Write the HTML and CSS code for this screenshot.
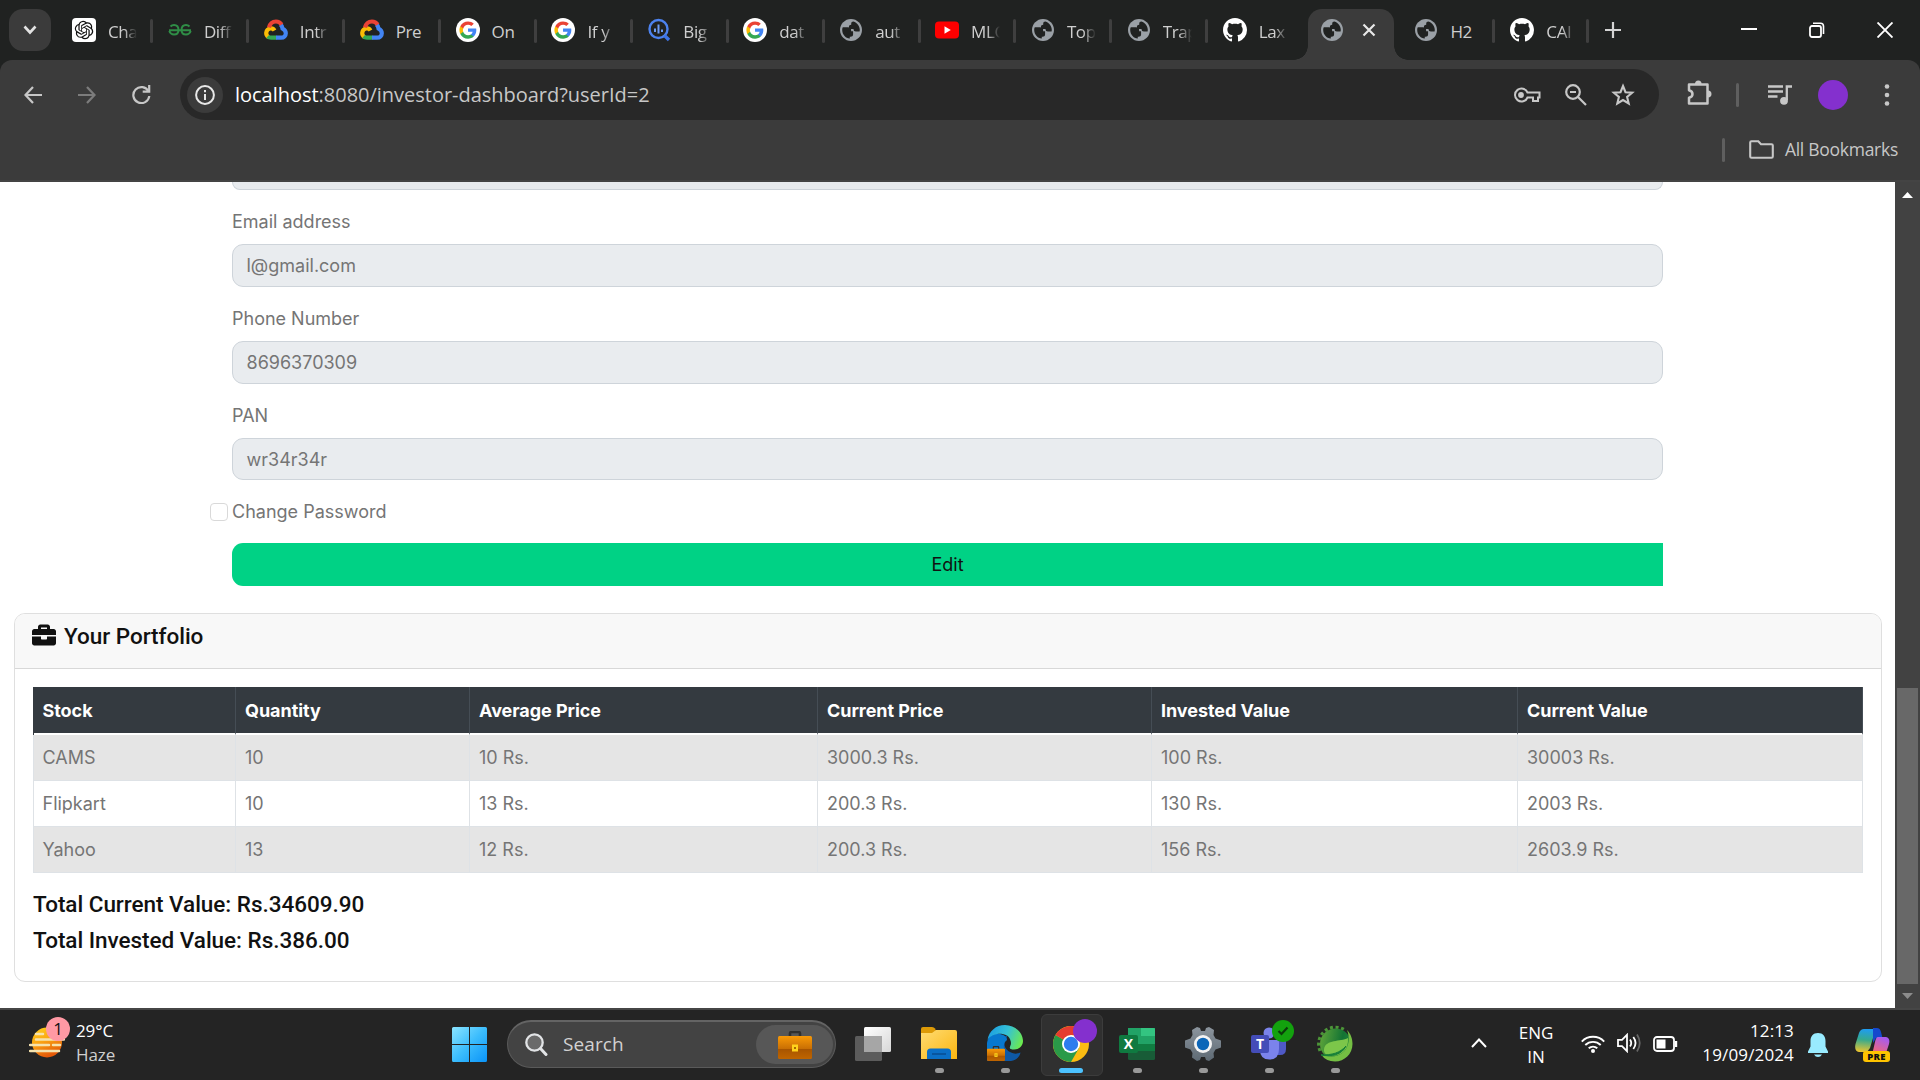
FILE: index.html
```html
<!DOCTYPE html>
<html lang="en">
<head>
<meta charset="utf-8">
<title>Investor Dashboard</title>
<link rel="stylesheet" href="styles.css">
</head>
<body>
<svg class="defs" width="0" height="0">
  <defs>
    <linearGradient id="sun" x1="0" y1="0" x2=".4" y2="1"><stop offset="0" stop-color="#ffd21a"/><stop offset=".5" stop-color="#fba613"/><stop offset="1" stop-color="#e55a08"/></linearGradient>
    <linearGradient id="win" x1="0" y1="0" x2="1" y2="1"><stop offset="0" stop-color="#8be4ff"/><stop offset=".5" stop-color="#3cbdfd"/><stop offset="1" stop-color="#0a93f7"/></linearGradient>
    <linearGradient id="bag" x1="0" y1="0" x2="0" y2="1"><stop offset="0" stop-color="#f99a07"/><stop offset=".55" stop-color="#c96f04"/><stop offset=".58" stop-color="#a85500"/><stop offset="1" stop-color="#bf6500"/></linearGradient>
    <linearGradient id="folder" x1="0" y1="0" x2="1" y2="1"><stop offset="0" stop-color="#ffdc73"/><stop offset="1" stop-color="#fbb50f"/></linearGradient>
    <linearGradient id="edgeTop" x1="0" y1=".3" x2="1" y2=".6"><stop offset="0" stop-color="#1b9de2"/><stop offset=".5" stop-color="#35c1d6"/><stop offset="1" stop-color="#6cea4f"/></linearGradient>
    <linearGradient id="gear" x1="0" y1="0" x2="0" y2="1"><stop offset="0" stop-color="#8c959e"/><stop offset="1" stop-color="#5e6a74"/></linearGradient>
    <linearGradient id="spring" x1="0" y1="0" x2="1" y2=".2"><stop offset="0" stop-color="#63a83a"/><stop offset=".75" stop-color="#137334"/><stop offset="1" stop-color="#1c8038"/></linearGradient>
    <linearGradient id="copL" x1=".3" y1="0" x2=".2" y2="1"><stop offset="0" stop-color="#1f9cf0"/><stop offset=".45" stop-color="#35a98f"/><stop offset="1" stop-color="#f0c52c"/></linearGradient>
    <linearGradient id="copR" x1=".6" y1="0" x2=".2" y2="1"><stop offset="0" stop-color="#a75bf0"/><stop offset="1" stop-color="#fb6a68"/></linearGradient>
    <linearGradient id="view" x1="0" y1="0" x2="1" y2="1"><stop offset="0" stop-color="#ffffff"/><stop offset="1" stop-color="#d7d7d7"/></linearGradient>
    <symbol id="globe" viewBox="2 2 20 20"><path fill="#9aa0a6" d="M12 2C6.480 2 2 6.480 2 12s4.480 10 10 10 10-4.480 10-10S17.520 2 12 2z"/><path class="sea" d="M4 12c0-1 .1-1.600.5-2.400h4.700c2 0 2.900 1 2.900 2.500v1.100h1.800v3c0 1.300-1 2-2.300 2h-.7v1.600C7 19.500 4 16 4 12zM14.200 4.300c3.400 1 5.800 4.200 5.800 7.700l-.2 1.400h-3.300c-1.400 0-2.200-.8-2.200-2.300h-2.300c-1.200 0-1.900-.8-1.900-1.900 0-1.300.8-2 2.100-2V6.100c0-1 .7-1.800 2-1.800z"/></symbol>
    <symbol id="github" viewBox="0 0 16 16"><path fill="#fff" d="M8 0C3.58 0 0 3.58 0 8c0 3.54 2.29 6.53 5.47 7.59.4.07.55-.17.55-.38 0-.19-.01-.82-.01-1.49-2.01.37-2.53-.49-2.69-.94-.09-.23-.48-.94-.82-1.13-.28-.15-.68-.52-.01-.53.63-.01 1.08.58 1.23.82.72 1.21 1.87.87 2.33.66.07-.52.28-.87.51-1.07-1.78-.2-3.64-.89-3.64-3.95 0-.87.31-1.59.82-2.15-.08-.2-.36-1.02.08-2.12 0 0 .67-.21 2.2.82.64-.18 1.32-.27 2-.27s1.36.09 2 .27c1.53-1.04 2.200-.82 2.200-.82.44 1.100.16 1.920.08 2.120.51.56.82 1.270.82 2.150 0 3.070-1.870 3.750-3.650 3.950.29.25.54.73.54 1.480 0 1.070-.01 1.930-.01 2.200 0 .21.15.46.55.38A8.013 8.013 0 0 0 16 8c0-4.420-3.580-8-8-8z"/></symbol>
    <symbol id="google" viewBox="0 0 24 24"><circle cx="12" cy="12" r="12" fill="#fff"/><g transform="translate(2.600 2.600) scale(.785)"><path fill="#4285f4" d="M22.56 12.25c0-.78-.07-1.53-.2-2.25H12v4.26h5.92c-.26 1.37-1.04 2.53-2.21 3.31v2.77h3.57c2.08-1.92 3.28-4.74 3.28-8.09z"/><path fill="#34a853" d="M12 23c2.97 0 5.46-.98 7.28-2.66l-3.57-2.77c-.98.66-2.23 1.06-3.71 1.06-2.86 0-5.29-1.93-6.16-4.53H2.18v2.84C3.99 20.53 7.7 23 12 23z"/><path fill="#fbbc05" d="M5.84 14.09c-.22-.66-.35-1.36-.35-2.09s.13-1.43.35-2.09V7.07H2.18C1.43 8.55 1 10.22 1 12s.43 3.45 1.18 4.93l3.66-2.84z"/><path fill="#ea4335" d="M12 5.38c1.62 0 3.06.56 4.21 1.64l3.15-3.15C17.45 2.09 14.97 1 12 1 7.7 1 3.99 3.47 2.18 7.07l3.66 2.84c.87-2.6 3.3-4.53 6.16-4.53z"/></g></symbol>
    <symbol id="cloud" viewBox="0 0 24 24"><g fill="none" stroke-width="4.200"><path stroke="#fbbc05" d="M10.500 12.500C8.500 9 3 10 2.300 14.500c-.3 2 .8 3.700 2.300 4.700"/><path stroke="#34a853" d="M3.600 18.500c1 .9 2.200 1.200 3.400 1.200h5.500"/><path stroke="#4285f4" d="M12 19.700h5c3 0 4.800-2 4.800-4.500 0-2.200-1.300-3.700-3.200-4.600-.3-2-1-3.300-2.200-4.300"/><path stroke="#ea4335" d="M5 9.500c1-4 3.500-6 7-6 2.500 0 4.300 1.100 5.600 3.100"/></g></symbol>
    <symbol id="bagicon" viewBox="0 0 34 28"><path d="M12 6V2.500Q12 1 13.500 1h7Q22 1 22 2.500V6" fill="none" stroke="#30302f" stroke-width="2.600"/><rect y="5" width="34" height="23" rx="1.500" fill="url(#bag)"/><rect x="14" y="13.500" width="6" height="7" fill="#ffd21c"/><rect x="16" y="16" width="2" height="2" fill="#a86a00"/></symbol>
  </defs>
</svg>

<div class="tabstrip">
  <div class="tabsearch"><svg width="14" height="10" viewBox="0 0 14 10"><path d="M1.500 1.500 7 7.500l5.500-6" fill="none" stroke="#e3e3e3" stroke-width="2.600"/></svg></div>
  <div class="tabs">
    <div class="tab"><svg class="fav" viewBox="0 0 24 24"><rect width="24" height="24" rx="4" fill="#fff"/><path transform="translate(2.800 2.800) scale(.77)" fill="#111" d="M22.2819 9.8211a5.9847 5.9847 0 0 0-.5157-4.9108 6.0462 6.0462 0 0 0-6.5098-2.9A6.0651 6.0651 0 0 0 4.9807 4.1818a5.9847 5.9847 0 0 0-3.9977 2.9 6.0462 6.0462 0 0 0 .7427 7.0966 5.98 5.98 0 0 0 .511 4.9107 6.051 6.051 0 0 0 6.5146 2.9001A5.9847 5.9847 0 0 0 13.2599 24a6.0557 6.0557 0 0 0 5.7718-4.2058 5.9894 5.9894 0 0 0 3.9977-2.9001 6.0557 6.0557 0 0 0-.7475-7.073zm-9.022 12.6081a4.4755 4.4755 0 0 1-2.8764-1.0408l.1419-.0804 4.7783-2.7582a.7948.7948 0 0 0 .3927-.6813v-6.7369l2.02 1.1686a.071.071 0 0 1 .038.052v5.5826a4.504 4.504 0 0 1-4.4945 4.4944zm-9.6607-4.1254a4.4708 4.4708 0 0 1-.5346-3.0137l.142.0852 4.783 2.7582a.7712.7712 0 0 0 .7806 0l5.8428-3.3685v2.3324a.0804.0804 0 0 1-.0332.0615L9.74 19.9502a4.4992 4.4992 0 0 1-6.1408-1.6464zM2.3408 7.8956a4.485 4.485 0 0 1 2.3655-1.9728V11.6a.7664.7664 0 0 0 .3879.6765l5.8144 3.3543-2.0201 1.1685a.0757.0757 0 0 1-.071 0l-4.8303-2.7865A4.504 4.504 0 0 1 2.3408 7.872zm16.5963 3.8558L13.1038 8.364 15.1192 7.2a.0757.0757 0 0 1 .071 0l4.8303 2.7913a4.4944 4.4944 0 0 1-.6765 8.1042v-5.6772a.79.79 0 0 0-.407-.667zm2.0107-3.0231l-.142-.0852-4.7735-2.7818a.7759.7759 0 0 0-.7854 0L9.409 9.2297V6.8974a.0662.0662 0 0 1 .0284-.0615l4.8303-2.7866a4.4992 4.4992 0 0 1 6.6802 4.66zM8.3065 12.863l-2.02-1.1638a.0804.0804 0 0 1-.038-.0567V6.0742a4.4992 4.4992 0 0 1 7.3757-3.4537l-.142.0805L8.704 5.459a.7948.7948 0 0 0-.3927.6813zm1.0976-2.3654l2.602-1.4998 2.6069 1.4998v2.9994l-2.5974 1.4997-2.6067-1.4997Z"/></svg><span>Cha</span></div>
    <div class="tab"><svg class="fav" viewBox="0 0 24 24"><path fill="none" stroke="#2f8d46" stroke-width="2" d="M2.500 8.500Q4 7 6 7q4.500 0 4.500 5 0 4.500-4.500 4.500-3.500 0-4.800-3.500M1 12.300h22M21.500 8.500Q20 7 18 7q-4.500 0-4.500 5 0 4.500 4.500 4.500 3.500 0 4.800-3.500"/></svg><span>Diff</span></div>
    <div class="tab"><svg class="fav"><use href="#cloud"/></svg><span>Intr</span></div>
    <div class="tab"><svg class="fav"><use href="#cloud"/></svg><span class="full">Pre</span></div>
    <div class="tab"><svg class="fav"><use href="#google"/></svg><span class="full">On</span></div>
    <div class="tab"><svg class="fav"><use href="#google"/></svg><span>If y</span></div>
    <div class="tab"><svg class="fav" viewBox="0 0 24 24"><circle cx="11.500" cy="11" r="9" fill="none" stroke="#4c82ee" stroke-width="2.400"/><path stroke="#3d74e6" stroke-width="3.400" d="m17.500 17.500 4.500 4.500"/><path stroke="#6d9bf5" stroke-width="2" d="M8 10.500V14M11.500 6.500v9M15 11.500V14"/></svg><span>Big</span></div>
    <div class="tab"><svg class="fav"><use href="#google"/></svg><span>dat</span></div>
    <div class="tab"><svg class="fav small"><use href="#globe"/></svg><span>aut</span></div>
    <div class="tab"><svg class="fav" viewBox="0 0 24 24"><rect y="3.500" width="24" height="17" rx="4" fill="#f00"/><path fill="#fff" d="m9.500 8.300 6.300 3.700-6.300 3.700z"/></svg><span>MLO</span></div>
    <div class="tab"><svg class="fav small"><use href="#globe"/></svg><span>Top</span></div>
    <div class="tab"><svg class="fav small"><use href="#globe"/></svg><span>Trap</span></div>
    <div class="tab last"><svg class="fav"><use href="#github"/></svg><span>Lax</span></div>
    <div class="tab active"><svg class="fav small"><use href="#globe"/></svg><svg class="close" width="14" height="14" viewBox="0 0 14 14"><path d="m1.500 1.500 11 11m0-11-11 11" stroke="#e8e8e8" stroke-width="2.200"/></svg></div>
    <div class="tab h2"><svg class="fav small"><use href="#globe"/></svg><span class="full">H2</span></div>
    <div class="tab ca"><svg class="fav"><use href="#github"/></svg><span>CAI</span></div>
  </div>
  <svg class="plus" width="16" height="16" viewBox="0 0 16 16"><path d="M8 0v16M0 8h16" stroke="#d4d4d4" stroke-width="2.200"/></svg>
  <div class="wincontrols">
    <svg width="16" height="16" viewBox="0 0 16 16"><path d="M0 7h16" stroke="#fff" stroke-width="2"/></svg>
    <svg width="16" height="16" viewBox="0 0 16 16"><rect x="1" y="4" width="11" height="11" rx="2" fill="none" stroke="#fff" stroke-width="1.800"/><path d="M4 1.300h7.500q3 0 3 3V12" fill="none" stroke="#fff" stroke-width="1.600"/></svg>
    <svg width="16" height="16" viewBox="0 0 16 16"><path d="m.5.5 15 15m0-15-15 15" stroke="#fff" stroke-width="1.900"/></svg>
  </div>
</div>

<div class="toolbar">
  <div class="nav">
    <svg width="18" height="18" viewBox="0 0 18 18"><path d="M18 9H1.500M9 1 1.500 9 9 17" fill="none" stroke="#c7c7c7" stroke-width="2.200"/></svg>
    <svg width="18" height="18" viewBox="0 0 18 18"><path d="M0 9h16.500M9 1l7.500 8L9 17" fill="none" stroke="#7c7c7c" stroke-width="2.200"/></svg>
    <svg width="19" height="19" viewBox="0 0 19 19"><path d="M16.500 6.500A8 8 0 1 0 17.300 11" fill="none" stroke="#c7c7c7" stroke-width="2.200"/><path d="M18.300 0v7.800h-7.600V5.600h5.400V0z" fill="#c7c7c7"/></svg>
  </div>
  <div class="omnibox">
    <div class="info"><svg width="20" height="20" viewBox="0 0 20 20"><circle cx="10" cy="10" r="8.900" fill="none" stroke="#e8e8e8" stroke-width="2"/><path d="M10 9v6M10 5v2.200" stroke="#e8e8e8" stroke-width="2"/></svg></div>
    <div class="url"><b>localhost</b>:8080/investor-dashboard?userId=2</div>
    <div class="omni-icons">
      <svg width="28" height="18" viewBox="0 0 28 18"><path d="M14.500 6.500a6.500 6.500 0 1 0 0 5H20V15h5v-3.500h1.500v-5z" fill="none" stroke="#c7c7c7" stroke-width="2"/><circle cx="8" cy="9" r="2.900" fill="#c7c7c7"/></svg>
      <svg width="22" height="22" viewBox="0 0 22 22"><circle cx="8" cy="8" r="6.800" fill="none" stroke="#c7c7c7" stroke-width="2.200"/><path d="m13 13 8 8M5 8h6" stroke="#c7c7c7" stroke-width="2.200"/></svg>
      <svg width="24" height="24" viewBox="0 0 24 24"><path d="m12 3 2.500 6.200 6.700.5-5.100 4.300 1.600 6.500L12 17l-5.700 3.500 1.600-6.500-5.100-4.300 6.700-.5z" fill="none" stroke="#c7c7c7" stroke-width="2.100"/></svg>
    </div>
  </div>
  <svg class="puzzle" width="25" height="26" viewBox="0 0 25 26"><path d="M2 4.500h18.500v19H2v-5.700q3.500-.8 3.500-3.800T2 10.200z" fill="none" stroke="#c7c7c7" stroke-width="2.500" stroke-linejoin="round"/><path fill="#c7c7c7" d="M8 4a3.300 3.500 0 0 1 6.600 0zM21 10.500a3.500 3.500 0 0 1 0 7z"/></svg>
  <i class="vsep"></i>
  <svg class="media" width="24" height="22" viewBox="0 0 24 22"><path d="M0 2.500h15M0 7.500h15M0 12.500h9.500M18.800 16V2.500H24" fill="none" stroke="#c7c7c7" stroke-width="2.300"/><circle cx="16" cy="16.800" r="3.900" fill="#c7c7c7"/></svg>
  <div class="avatar"></div>
  <svg class="dots" width="6" height="22" viewBox="0 0 6 22"><g fill="#c7c7c7"><circle cx="3" cy="2.500" r="2.300"/><circle cx="3" cy="11" r="2.300"/><circle cx="3" cy="19.500" r="2.300"/></g></svg>
</div>
<div class="bookmarks">
  <i class="vsep"></i>
  <svg width="25" height="19" viewBox="0 0 25 19"><path d="M1.200 2.500q0-1.300 1.300-1.300h6.800l2.700 3h10.500q1.300 0 1.300 1.300v11q0 1.300-1.300 1.300h-20q-1.300 0-1.300-1.300z" fill="none" stroke="#c7c7c7" stroke-width="2.100"/></svg>
  <span>All Bookmarks</span>
</div>

<div class="viewport">
  <main>
    <div class="form">
      <div class="prev-input"></div>
      <label>Email address</label><div class="input">l@gmail.com</div>
      <label>Phone Number</label><div class="input">8696370309</div>
      <label>PAN</label><div class="input short">wr34r34r</div>
      <div class="check"><i></i><span>Change Password</span></div>
      <div class="edit">Edit</div>
    </div>
    <section class="card">
      <div class="card-head"><svg width="24" height="24" viewBox="0 0 512 512"><path fill="#111" d="M320 336c0 8.840-7.160 16-16 16h-96c-8.840 0-16-7.160-16-16v-48H0v144c0 25.600 22.400 48 48 48h416c25.600 0 48-22.400 48-48V288H320v48zm144-208h-80V80c0-25.600-22.400-48-48-48H176c-25.600 0-48 22.400-48 48v48H48c-25.600 0-48 22.400-48 48v80h512v-80c0-25.600-22.400-48-48-48zm-144 0H192V96h128v32z"/></svg><h5>Your Portfolio</h5></div>
      <div class="card-body">
        <table>
          <colgroup><col class="c1"><col class="c2"><col class="c3"><col class="c4"><col class="c5"><col class="c6"></colgroup>
          <thead><tr><th>Stock</th><th>Quantity</th><th>Average Price</th><th>Current Price</th><th>Invested Value</th><th>Current Value</th></tr></thead>
          <tbody>
            <tr><td>CAMS</td><td>10</td><td>10 Rs.</td><td>3000.3 Rs.</td><td>100 Rs.</td><td>30003 Rs.</td></tr>
            <tr><td>Flipkart</td><td>10</td><td>13 Rs.</td><td>200.3 Rs.</td><td>130 Rs.</td><td>2003 Rs.</td></tr>
            <tr><td>Yahoo</td><td>13</td><td>12 Rs.</td><td>200.3 Rs.</td><td>156 Rs.</td><td>2603.9 Rs.</td></tr>
          </tbody>
        </table>
        <h5 class="total">Total Current Value: Rs.34609.90</h5>
        <h5 class="total">Total Invested Value: Rs.386.00</h5>
      </div>
    </section>
  </main>
  <div class="scrollbar">
    <svg width="11" height="6" viewBox="0 0 11 6"><path d="M5.500 0 11 6H0z" fill="#fff"/></svg>
    <div class="thumb"></div>
    <svg width="11" height="6" viewBox="0 0 11 6"><path d="M5.500 6 11 0H0z" fill="#8c8c8c"/></svg>
  </div>
</div>

<div class="taskbar">
  <div class="weather">
    <div class="haze">
      <svg width="36" height="34" viewBox="0 0 36 34"><circle cx="18" cy="17.500" r="15" fill="url(#sun)"/><path d="M6 9h7M6 14.500h28M0 20h19M23 20h7M0 26h29" stroke="#f5e2ad" stroke-width="2.500" stroke-linecap="round" transform="translate(1)"/></svg>
      <span class="badge">1</span>
    </div>
    <div class="wtext"><span>29°C</span><span class="dim">Haze</span></div>
  </div>
  <svg class="start" width="35" height="35" viewBox="0 0 35 35"><path fill="url(#win)" d="M1.500 0H17v17H0V1.500Q0 0 1.500 0zM18 0h15.500Q35 0 35 1.500V17H18zM0 18h17v17H1.500Q0 35 0 33.500zM18 18h17v15.500q0 1.500-1.500 1.500H18z"/></svg>
  <div class="search">
    <svg width="23" height="23" viewBox="0 0 23 23"><circle cx="9.500" cy="9.500" r="8.200" fill="#6a6a6a" stroke="#e2e4e6" stroke-width="2.300"/><path d="m15.500 15.500 5.500 6" stroke="#e2e4e6" stroke-width="3" stroke-linecap="round"/></svg>
    <span>Search</span>
    <div class="bagpill"><svg width="34" height="28"><use href="#bagicon"/></svg></div>
  </div>
  <div class="apps">
    <div class="app none"><svg width="38" height="38" viewBox="0 0 38 38"><rect x="10" y="2" width="27" height="25" rx="1.500" fill="url(#view)"/><rect x="1" y="11" width="27" height="25" rx="1.500" fill="#5c5c5c"/><path d="M10 11h18v16H10z" fill="#a6a6a6"/></svg></div>
    <div class="app"><svg width="38" height="38" viewBox="0 0 38 38"><path d="M1 10V4q0-2 2-2h9q2 0 3 1.500l1.500 3.500L12 11z" fill="#dd9a07"/><path d="M1 8h11l4-3h19q2 0 2 2v27H1z" fill="url(#folder)"/><path d="M7 34V27q0-3.500 3.500-3.500h17q3.500 0 3.500 3.500v7z" fill="#0b6fc6"/><path d="M12 29h14" stroke="#084c92" stroke-width="1.500"/></svg></div>
    <div class="app"><svg width="38" height="38" viewBox="0 0 38 38"><path d="M1 19v17h24c6-1 9-5 9.500-8.500-3 1.500-7 1.500-9.500 0-5-2-7-6-5-10l1-7z" fill="#0e58a5"/><path d="M1 18C2 11 8 8 14 9c5 1 7.500 4 7 7-3 1-4 5-2.500 9H1z" fill="#0878cf"/><path d="M1.500 15C3 6 10 0 19 0c10 0 18 8 18 16 0 5-4 8.500-9 8.500-3 0-6-1-4.500-3.500 3-5 0-11-7-12-6-.8-12 1.500-15 6z" fill="url(#edgeTop)"/><path d="M19 17c-2 6 3 11 16 9-3 0-8 0-11-2-1-2 1-3 1-6q-1-4-4-3z" fill="#242424"/><svg x="1" y="21" width="18" height="15"><use href="#bagicon"/></svg></svg></div>
    <div class="app current"><svg width="38" height="38" viewBox="0 0 38 38"><circle cx="19" cy="19" r="18" fill="#fbbc12"/><path d="M3.500 10A18 18 0 0 0 19 37l8-14-8-4z" fill="#2a9a48"/><path d="M3.500 10A18 18 0 0 1 34.600 10H19v9z" fill="#e53b30"/><circle cx="19" cy="19" r="9" fill="#fff"/><circle cx="19" cy="19" r="7.200" fill="#2d7cee"/></svg><i class="profile"></i></div>
    <div class="app"><svg width="38" height="38" viewBox="0 0 38 38"><path d="M10 3h27v16H10z" fill="#21a366"/><path d="M23 3h12.500Q37 3 37 4.500V11H23z" fill="#33c481"/><path d="M10 19h27v8H10z" fill="#107c41"/><path d="M10 26h27v7.500q0 1.500-1.500 1.500h-24Q10 35 10 33.500z" fill="#185c37"/><rect x="1" y="10" width="19" height="18" rx="2" fill="#0f7a40"/><text x="10.500" y="24" text-anchor="middle" class="glyph">X</text></svg></div>
    <div class="app"><svg width="38" height="38" viewBox="0 0 38 38"><path fill="url(#gear)" d="m13 2 3 1 1 3h4l1-3 3-1 5 3-.5 5 2 3.500 5.500 2v7l-5.500 2-2 3.500.5 4.500-5 3.500-3-1-1-3h-4l-1 3-3 1-5-3.500.500-4.500-2-3.500-5.500-2v-7l5.500-2 2-3.500L8 5z"/><circle cx="19" cy="19" r="9" fill="#f3f3f3"/><circle cx="19" cy="19" r="6.200" fill="#0c66b8"/></svg></div>
    <div class="app"><svg width="38" height="38" viewBox="0 0 38 38"><path d="M25 15h11v9q0 6-6 6h-5z" fill="#4f59c6"/><circle cx="19" cy="8" r="5.500" fill="#7b83eb"/><path d="M10 15h19v9q0 10.500-9.500 10.500T10 25z" fill="#7b83eb"/><rect x="1" y="10" width="18" height="18" rx="2" fill="#444db8"/><text x="10" y="24" text-anchor="middle" class="glyph">T</text></svg><i class="ok"><svg width="12" height="10" viewBox="0 0 12 10"><path d="m1.500 5 3 3L10.500 1.500" fill="none" stroke="#0b3c0a" stroke-width="2.200"/></svg></i></div>
    <div class="app"><svg width="38" height="38" viewBox="0 0 38 38"><circle cx="19.500" cy="19" r="15.500" fill="url(#spring)"/><path d="M4 26A17 17 0 0 1 29 5" fill="none" stroke="#4c9538" stroke-width="3" stroke-dasharray="3 2.600"/><path d="M31 5c4 4 5.500 9 5.500 14 0 10-8 17.500-17.500 17.500q-9 0-14-7c8 3 17 3 23-3 5-5 6-14 3-21.500z" fill="#74bf43"/><path d="M32 13c-8 4-22 1-24 11-.5 3 1 5 3 6 12 3 22-3 21-17z" fill="#7cc64a"/><path d="M5 30c10 2 21 0 25-9-6 7-14 9-25 9z" fill="#178039" stroke="#178039" stroke-width="1"/></svg></div>
  </div>
  <div class="tray">
    <svg class="chev" width="16" height="10" viewBox="0 0 16 10"><path d="m1 9 7-7.500L15 9" fill="none" stroke="#fff" stroke-width="2"/></svg>
    <div class="lang"><span>ENG</span><span>IN</span></div>
    <svg class="wifi" width="24" height="18" viewBox="0 0 24 18"><g fill="none" stroke="#fff" stroke-width="1.900"><path d="M.8 6.600a15.500 15.500 0 0 1 22.400 0M4.300 10a11 11 0 0 1 15.400 0M7.700 13.300a6.500 6.500 0 0 1 8.600 0"/></g><circle cx="12" cy="16" r="2" fill="#fff"/></svg>
    <svg class="vol" width="25" height="20" viewBox="0 0 25 20"><g fill="none" stroke="#fff" stroke-width="1.800"><path d="M1 6.800h4l5-5v16.400l-5-5H1z"/><path d="M13 6.500q2.500 3.500 0 7M16.300 4q4.500 6 0 12"/><path d="M20 1.500q5.500 8.500 0 17" stroke="#666"/></g></svg>
    <svg class="bat" width="25" height="16" viewBox="0 0 25 16"><rect x="1" y="1" width="20" height="14" rx="3" fill="none" stroke="#fff" stroke-width="1.800"/><path d="M3.500 3.500h9v9h-9z" fill="#fff"/><path d="M23 5v6" stroke="#fff" stroke-width="2.400"/></svg>
    <div class="clock"><span>12:13</span><span>19/09/2024</span></div>
    <svg class="bell" width="20" height="24" viewBox="0 0 20 24"><path d="M10 0c5 0 7.500 3.500 7.500 8v5.500l2.500 5V20H0v-1.500l2.500-5V8C2.500 3.500 5 0 10 0zM6 21.500h8q-1.500 2.500-4 2.500t-4-2.500z" fill="#99ebff"/></svg>
    <div class="copilot"><svg width="35" height="27" viewBox="0 0 35 27"><path d="M9 1h15l2 6-8 3-3 10-3 4H4q-5-1-3.500-8L4 5q1.500-4 5-4z" fill="url(#copL)"/><path d="M18 0h4q3 0 4 4l1.500 6H21l-3 5z" fill="#1548cd"/><path d="M23 9h8q4.500 1 3 7l-3 9q-1 2-5 2h-9l3-13q1-5 3-5z" fill="url(#copR)"/></svg><span>PRE</span></div>
  </div>
</div>
</body>
</html>
```
FILE: styles.css
```css
* { box-sizing: border-box; }
body { margin: 0; width: 1920px; height: 1080px; overflow: hidden; background: #fff; font-family: "Open Sans", "Noto Sans", sans-serif; display: flex; flex-direction: column; }
svg { display: block; flex: none; }
.defs { position: absolute; }

/* Tab strip */
.tabstrip { height: 60px; flex: none; background: #202221; display: flex; align-items: flex-start; }
.tabsearch { width: 42px; height: 42px; margin: 9px 0 0 9px; border-radius: 14px; background: #3b3b3b; display: flex; align-items: center; justify-content: center; }
.tabs { display: flex; margin-left: 6.5px; width: 1531px; }
.tab { position: relative; flex: none; width: 95.9px; height: 60px; padding: 18px 0 0 14.5px; display: flex; align-items: flex-start; }
.tab::after { content: ""; position: absolute; right: 0; top: 19px; width: 3px; height: 24px; border-radius: 2px; background: #3f3f3f; }
.tab.active::after, .tab.last::after { display: none; }
.fav { width: 24px; height: 24px; }
.fav.small { width: 22px; height: 22px; margin: 1px 1px 0; }
.sea { fill: #202221; }
.tab span { width: 29px; margin-left: 12px; white-space: nowrap; font-size: 17px; letter-spacing: -.4px; line-height: 28px; color: #cfcfcf; -webkit-mask-image: linear-gradient(90deg, #000 55%, transparent); mask-image: linear-gradient(90deg, #000 55%, transparent); }
.tab span.full { -webkit-mask-image: none; mask-image: none; }
.tab.active { width: 86px; height: 51px; margin: 9px 6.4px 0 3.5px; padding: 9px 0 0 12px; background: #3b3b3b; border-radius: 14px 14px 0 0; }
.tab.active::before { content: ""; position: absolute; left: -14px; right: -14px; bottom: 0; height: 14px; background: radial-gradient(circle at 0 0, transparent 13.500px, #3b3b3b 14px) left / 14px 14px no-repeat, radial-gradient(circle at 100% 0, transparent 13.500px, #3b3b3b 14px) right / 14px 14px no-repeat; }
.tab.active .close { margin: 5px 0 0 18.500px; }
.tab.h2::after { right: 1px; }
.tab.ca::after { right: 3px; }
.plus { margin: 22px 0 0 16px; }
.wincontrols { display: flex; gap: 52px; margin: 22px 27px 0 auto; }

/* Address row */
.toolbar { height: 69px; flex: none; background: #202221; display: flex; align-items: center; position: relative; isolation: isolate; }
.toolbar::before { content: ""; position: absolute; inset: 0; z-index: -1; background: #3b3b3b; border-radius: 12px 12px 0 0; }
.toolbar { background: linear-gradient(#202221 0 15px, #3b3b3b 15px); }
.nav { display: flex; gap: 36px; margin-left: 24px; width: 156px; align-items: center; }
.omnibox { width: 1479px; height: 51px; border-radius: 26px; background: #282828; display: flex; align-items: center; padding-left: 7px; }
.info { width: 36px; height: 36px; border-radius: 50%; background: #3b3b3b; display: flex; align-items: center; justify-content: center; }
.url { margin-left: 12px; font-size: 20px; letter-spacing: -.02px; color: #c7c7c7; white-space: nowrap; }
.url b { font-weight: 400; color: #fff; }
.omni-icons { margin: 0 24px 0 auto; display: flex; align-items: center; gap: 24px; }
.puzzle { margin-left: 28px; margin-top: -4px; }
.vsep { width: 3px; height: 24px; border-radius: 2px; background: #5f5f5f; }
.toolbar .vsep { margin-left: 24px; }
.media { margin-left: 29px; }
.avatar { width: 30px; height: 30px; border-radius: 50%; background: #8430ce; margin-left: 26px; }
.dots { margin-left: 36px; }
.bookmarks { height: 53px; flex: none; background: #3b3b3b; border-bottom: 2px solid #444; display: flex; justify-content: flex-end; align-items: center; padding: 0 22px 10px 0; }
.bookmarks svg { margin: 0 11px 0 24px; }
.bookmarks span { font-size: 17.500px; letter-spacing: -.27px; color: #c7c7c7; white-space: nowrap; margin-top: -2px; }

/* Page */
.viewport { height: 826px; flex: none; display: flex; background: #fff; overflow: hidden; }
main { width: 1895px; font-family: Inter, "Liberation Sans", sans-serif; font-size: 18px; line-height: 27px; color: #757575; }
.form { width: 1431px; margin-left: 232px; }
.prev-input { height: 8px; background: #e9ecef; border: 1px solid #ced4da; border-top: 0; border-radius: 0 0 8px 8px; }
.form label { display: block; margin: 18px 0 9px; }
.input { height: 43px; background: #e9ecef; border: 1px solid #ced4da; border-radius: 11px; padding: 7px 13.500px; }
.input.short { height: 42px; }
.check { display: flex; align-items: center; margin: 18px 0 0 -22px; height: 27px; }
.check i { width: 18px; height: 18px; border: 1px solid #d9d9d9; border-radius: 4px; margin-right: 4px; }
.edit { margin-top: 18px; height: 43px; background: #00d285; color: #111; text-align: center; line-height: 43px; border-radius: 11px 0 0 11px; }
.card { width: 1868px; height: 369px; margin: 27px 0 0 14px; border: 1px solid #dfdfdf; border-radius: 11px; overflow: hidden; }
.card-head { height: 55px; background: #f8f8f8; border-bottom: 1px solid #d8d8d8; display: flex; align-items: flex-start; padding: 9px 17px; }
h5 { margin: 0; font: 500 22.500px/27px Roboto, sans-serif; letter-spacing: -.03px; color: #111; }
.card-head h5 { margin-left: 8px; }
.card-body { padding: 18px; }
table { width: 1830px; border-collapse: separate; border-spacing: 0; table-layout: fixed; border-left: 1px solid #dee2e6; }
.c1 { width: 202px; } .c2 { width: 234px; } .c3 { width: 348px; } .c4 { width: 334px; } .c5 { width: 366px; }
th, td { text-align: left; padding: 0 9px; border-right: 1px solid #dee2e6; }
th { height: 48px; background: #343a40; background-clip: padding-box; color: #fff; font-weight: 700; letter-spacing: -.05px; border-right-color: #454d55; border-bottom: 2px solid #fff; }
th:first-child { box-shadow: -1px 0 #343a40; }
th:first-child, td:first-child { padding-left: 8.500px; }
td { height: 46px; border-bottom: 1px solid #dee2e6; }
tbody tr:nth-child(odd) td { background: #e5e5e5; }
.total { margin-top: 18px; }
.total + .total { margin-top: 9px; }
.scrollbar { width: 25px; background: #424242; display: flex; flex-direction: column; align-items: center; padding-top: 10px; }
.thumb { width: 21px; height: 296px; margin: 490px 0 9px; background: #686868; }

/* Taskbar */
.taskbar { height: 72px; flex: none; background: #242424; border-top: 2px solid #464646; display: flex; color: #fff; font-size: 17px; }
.weather { display: flex; width: 452px; padding-left: 29px; }
.haze { position: relative; width: 47px; padding-top: 15px; }
.badge { position: absolute; left: 17px; top: 7px; width: 24px; height: 24px; border-radius: 50%; background: #ff99a4; color: #111; text-align: center; line-height: 24px; font-size: 17px; }
.wtext, .lang, .clock { display: flex; flex-direction: column; line-height: 24px; padding-top: 9px; letter-spacing: -.1px; white-space: nowrap; }
.dim { color: #cfcfcf; }
.start { margin-top: 17px; }
.search { width: 329px; height: 48px; margin: 10px 0 0 20px; border-radius: 24px; background: #434343; border: 1px solid #5a5a5a; border-top: 2px solid #646464; display: flex; align-items: center; padding-left: 17px; }
.search span { margin: -2px 0 0 15px; font-size: 19px; letter-spacing: .1px; color: #d2d2d2; }
.bagpill { width: 77px; height: 39px; margin: 0 2px 0 auto; border-radius: 20px; background: #575757; display: flex; align-items: center; justify-content: center; }
.apps { display: flex; margin-left: 4px; }
.app { position: relative; width: 66px; height: 70px; padding: 15px 14px 0; }
.app::after { content: ""; position: absolute; left: 28.500px; top: 58px; width: 9px; height: 5px; border-radius: 3px; background: #999; }
.app.none::after { display: none; }
.app.current::before { content: ""; position: absolute; z-index: 0; left: 2.500px; top: 4px; width: 60px; height: 60px; border: 1px solid #3c3c3c; border-radius: 6px; background: #303030; }
.app.current::after { left: 21px; width: 24px; background: #4cc2ff; }
.app > svg { position: relative; }
.profile { position: absolute; left: 35px; top: 9px; width: 24px; height: 24px; border-radius: 50%; background: #8430ce; }
.ok { position: absolute; left: 36px; top: 10px; width: 22px; height: 22px; border-radius: 50%; background: #13a10e; display: flex; align-items: center; justify-content: center; }
.glyph { font: 700 14px "Open Sans", sans-serif; fill: #fff; }
.tray { display: flex; margin-left: 103px; width: 449px; }
.chev { margin-top: 28px; }
.lang { width: 66px; align-items: center; margin-left: 16px; padding-top: 11px; }
.wifi { margin: 25px 0 0 12px; }
.vol { margin: 23px 0 0 12px; }
.bat { margin: 26px 0 0 11px; }
.clock { width: 116px; align-items: flex-end; letter-spacing: .15px; }
.bell { margin: 23px 0 0 14px; }
.copilot { margin: 18px 0 0 27px; position: relative; height: 40px; }
.copilot span { position: absolute; left: 8px; top: 23px; width: 27px; height: 11px; border-radius: 3px; background: #ffc400; color: #111; font-size: 9.500px; font-weight: 800; line-height: 11px; text-align: center; letter-spacing: .3px; }
```
